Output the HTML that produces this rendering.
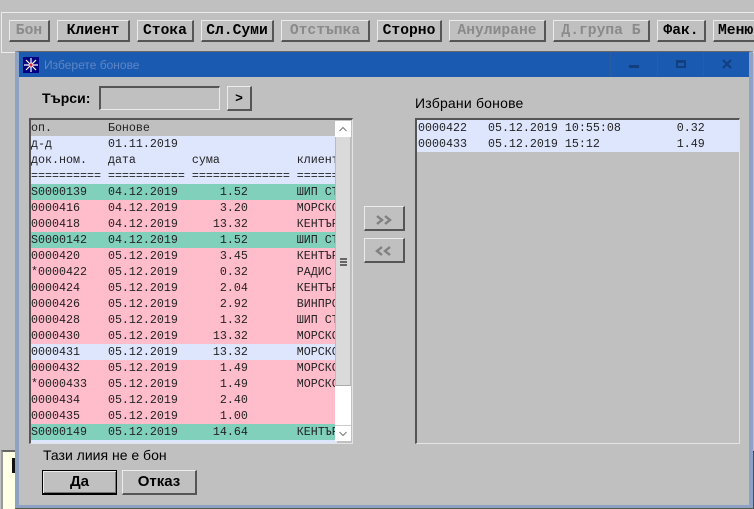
<!DOCTYPE html>
<html><head><meta charset="utf-8"><style>
html,body{margin:0;padding:0}
body{width:754px;height:509px;overflow:hidden;position:relative;background:#c0c0c0;font-family:"Liberation Sans",sans-serif}
div{position:absolute;box-sizing:border-box}
.b{top:20px;height:22px;background:#c0c0c0;border:1px solid #ececec;border-right:2px solid #555;border-bottom:2px solid #555;font:bold 14.67px/20px "Liberation Mono",monospace;color:#000;text-align:center;white-space:pre;overflow:hidden}
.d{color:#8a8a8a}
.r{left:0;width:306px;height:16px;font:11.67px/17px "Liberation Mono",monospace;color:#222;white-space:pre;overflow:hidden}
.p{background:#ffbccb}.g{background:#80d0bc}.l{background:#dee6fd}
.q{left:0;width:322px;height:16px;font:11.67px/17px "Liberation Mono",monospace;color:#222;white-space:pre;overflow:hidden;background:#dee6fd;padding-left:1px}
.t{font-size:14px;line-height:16px;color:#000;white-space:pre}
</style></head><body>
<div style="left:1px;top:12px;width:753px;height:41px;border-top:1px solid #ececec;border-left:1px solid #ececec;border-bottom:1px solid #ececec"></div>
<div class="b d" style="left:9px;width:41px">Бон</div>
<div class="b" style="left:57px;width:73px">Клиент</div>
<div class="b" style="left:137px;width:57px">Стока</div>
<div class="b" style="left:201px;width:73px">Сл.Суми</div>
<div class="b d" style="left:281px;width:89px">Отстъпка</div>
<div class="b" style="left:377px;width:65px">Сторно</div>
<div class="b d" style="left:449px;width:97px">Анулиране</div>
<div class="b d" style="left:553px;width:97px">Д.група Б</div>
<div class="b" style="left:657px;width:49px">Фак.</div>
<div class="b" style="left:713px;width:60px;text-align:left;padding-left:4px">Меню</div>

<div style="left:752px;top:451px;width:2px;height:58px;background:#3f5550;border-top:1px solid #222"></div>
<div style="left:1px;top:450px;width:15px;height:59px;background:#ffffe6;border-top:2px solid #666;border-left:2px solid #999"></div>
<div style="left:12px;top:458px;width:4px;height:15px;background:#111"></div>

<div style="left:15px;top:51px;width:738px;height:458px;background:#c0c0c0;border:4px solid #8ea3c4;border-top:1px solid #666;border-bottom:4px solid #8ea3c4;outline:0"></div>
<div style="left:15px;top:508px;width:738px;height:1px;background:#555"></div>
<div style="left:19px;top:52px;width:730px;height:25px;background:#1a5ab0"></div>
<div style="left:23px;top:57px;width:16px;height:16px;background:#000080">
<svg width="16" height="16" viewBox="0 0 16 16" style="display:block"><path d="M8 1V15M1 8H15M3 3L13 13M13 3L3 13" stroke="#fff" stroke-width="1.2"/><circle cx="8" cy="8" r="2" fill="#e02040" stroke="#fff" stroke-width=".8"/></svg></div>
<div class="t" style="left:44px;top:57px;font-size:12px;color:#5f86c6">Изберете бонове</div>
<div style="left:610px;top:52px;width:1px;height:25px;background:#2c5e9e"></div>
<div style="left:657px;top:52px;width:1px;height:25px;background:#2c5e9e"></div>
<div style="left:703px;top:52px;width:1px;height:25px;background:#2c5e9e"></div>
<div style="left:629px;top:65px;width:10px;height:3px;background:#113f80"></div>
<div style="left:676px;top:60px;width:10px;height:8px;border:2px solid #113f80;border-top-width:3px"></div>
<div style="left:722px;top:59px;width:10px;height:10px"><svg width="10" height="10" style="display:block"><path d="M1 1L9 9M9 1L1 9" stroke="#113f80" stroke-width="2.2"/></svg></div>

<div class="t" style="left:42px;top:90px;font-weight:bold">Търси:</div>
<div style="left:99px;top:86px;width:121px;height:24px;border:1px solid #ececec;border-top:2px solid #555;border-left:2px solid #555"></div>
<div class="b" style="left:227px;top:86px;width:25px;height:25px;line-height:24px;font-size:13px">&gt;</div>

<div style="left:29px;top:118px;width:324px;height:326px;background:#c0c0c0;border:1px solid #e4e4e4;border-top:2px solid #555;border-left:2px solid #555">
 <div class="r" style="top:0">оп.        Бонове</div>
 <div class="r l" style="top:16px">д-д        01.11.2019</div>
 <div class="r l" style="top:32px">док.ном.   дата        сума           клиент</div>
 <div class="r l" style="top:48px">========== =========== ============== ======</div>
 <div class="r g" style="top:64px">S0000139   04.12.2019      1.52       ШИП СТ</div>
 <div class="r p" style="top:80px">0000416    04.12.2019      3.20       МОРСКО</div>
 <div class="r p" style="top:96px">0000418    04.12.2019     13.32       КЕНТЪР</div>
 <div class="r g" style="top:112px">S0000142   04.12.2019      1.52       ШИП СТ</div>
 <div class="r p" style="top:128px">0000420    05.12.2019      3.45       КЕНТЪР</div>
 <div class="r p" style="top:144px">*0000422   05.12.2019      0.32       РАДИС </div>
 <div class="r p" style="top:160px">0000424    05.12.2019      2.04       КЕНТЪР</div>
 <div class="r p" style="top:176px">0000426    05.12.2019      2.92       ВИНПРО</div>
 <div class="r p" style="top:192px">0000428    05.12.2019      1.32       ШИП СТ</div>
 <div class="r p" style="top:208px">0000430    05.12.2019     13.32       МОРСКО</div>
 <div class="r l" style="top:224px">0000431    05.12.2019     13.32       МОРСКО</div>
 <div class="r p" style="top:240px">0000432    05.12.2019      1.49       МОРСКО</div>
 <div class="r p" style="top:256px">*0000433   05.12.2019      1.49       МОРСКО</div>
 <div class="r p" style="top:272px">0000434    05.12.2019      2.40</div>
 <div class="r p" style="top:288px">0000435    05.12.2019      1.00</div>
 <div class="r g" style="top:304px">S0000149   05.12.2019     14.64       КЕНТЪР</div>
 <div class="l" style="left:0;top:320px;width:306px;height:3px"></div>
</div>
<div style="left:335px;top:121px;width:16px;height:16px;background:#fff"><svg width="16" height="16" style="display:block"><path d="M4.5 10L8 6.5L11.5 10" fill="none" stroke="#777" stroke-width="1"/></svg></div>
<div style="left:335px;top:137px;width:16px;height:249px;background:#dadada;border-left:1px solid #bbb;border-bottom:1px solid #aaa;border-right:1px solid #bbb"></div>
<div style="left:340px;top:258px;width:7px;height:1.5px;background:#666"></div>
<div style="left:340px;top:261px;width:7px;height:1.5px;background:#666"></div>
<div style="left:340px;top:264px;width:7px;height:1.5px;background:#666"></div>
<div style="left:335px;top:386px;width:16px;height:39px;background:#fff"></div>
<div style="left:335px;top:425px;width:16px;height:16px;background:#fff;border-top:1px solid #ccc"><svg width="16" height="15" style="display:block"><path d="M4.5 6L8 9.5L11.5 6" fill="none" stroke="#777" stroke-width="1"/></svg></div>

<div style="left:364px;top:206px;width:41px;height:25px;border:1px solid #ececec;border-right:2px solid #555;border-bottom:2px solid #555;background:#c0c0c0"><svg width="38" height="22" style="display:block"><path d="M12 10L17 14L12 18M20 10L25 14L20 18" transform="translate(0,-1)" fill="none" stroke="#808080" stroke-width="2.4"/></svg></div>
<div style="left:364px;top:238px;width:41px;height:25px;border:1px solid #ececec;border-right:2px solid #555;border-bottom:2px solid #555;background:#c0c0c0"><svg width="38" height="22" style="display:block"><path d="M17 10L12 14L17 18M25 10L20 14L25 18" transform="translate(0,-2)" fill="none" stroke="#808080" stroke-width="2.4"/></svg></div>

<div class="t" style="left:415px;top:95px;letter-spacing:.2px">Избрани бонове</div>
<div style="left:415px;top:118px;width:325px;height:326px;background:#c0c0c0;border:1px solid #e4e4e4;border-top:2px solid #555;border-left:2px solid #555">
 <div class="q" style="top:0">0000422   05.12.2019 10:55:08        0.32</div>
 <div class="q" style="top:16px">0000433   05.12.2019 15:12           1.49</div>
</div>

<div class="t" style="left:43px;top:447px">Тази лиия не е бон</div>
<div style="left:42px;top:470px;width:75px;height:25px;border:1px solid #000;border-bottom:2px solid #000;background:#c0c0c0;font:bold 15px/21px 'Liberation Sans',sans-serif;text-align:center;color:#000;box-shadow:inset 1px 1px #ececec,inset -1px -1px #777">Да</div>
<div style="left:122px;top:470px;width:75px;height:25px;border:1px solid #ececec;border-bottom:2px solid #555;border-right:2px solid #555;background:#c0c0c0;font:bold 15px/21px 'Liberation Sans',sans-serif;text-align:center;color:#000">Отказ</div>
</body></html>
